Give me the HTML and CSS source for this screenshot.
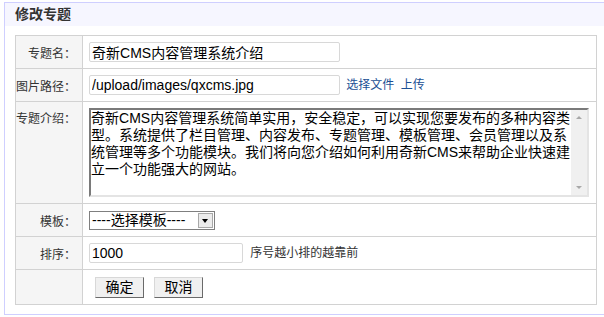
FILE: index.html
```html
<!DOCTYPE html>
<html lang="zh-CN">
<head>
    <meta charset="UTF-8">
    <title>修改专题</title>
    <link rel="stylesheet" href="styles.css">
</head>
<body>
    <div class="panel">
        <div class="panel-title">修改专题</div>
        <div class="panel-body">
            <table class="form-table">
                <tr>
                    <td class="label">专题名：</td>
                    <td><input type="text" class="text-input" value="奇新CMS内容管理系统介绍"></td>
                </tr>
                <tr>
                    <td class="label">图片路径：</td>
                    <td>
                        <input type="text" class="text-input" value="/upload/images/qxcms.jpg">
                        <a href="#" class="link">选择文件</a>
                        <a href="#" class="link">上传</a>
                    </td>
                </tr>
                <tr class="tall">
                    <td class="label">专题介绍：</td>
                    <td>
                        <div class="intro-box">
                            <textarea class="intro">奇新CMS内容管理系统简单实用，安全稳定，可以实现您要发布的多种内容类型。系统提供了栏目管理、内容发布、专题管理、模板管理、会员管理以及系统管理等多个功能模块。我们将向您介绍如何利用奇新CMS来帮助企业快速建立一个功能强大的网站。</textarea>
                            <div class="scroll">
                                <span class="arrow up"></span>
                                <span class="arrow down"></span>
                            </div>
                        </div>
                    </td>
                </tr>
                <tr>
                    <td class="label">模板：</td>
                    <td>
                        <div class="select">
                            <span class="select-text">----选择模板----</span>
                            <span class="select-btn"></span>
                        </div>
                    </td>
                </tr>
                <tr>
                    <td class="label">排序：</td>
                    <td>
                        <input type="text" class="text-input short" value="1000">
                        <span class="hint">序号越小排的越靠前</span>
                    </td>
                </tr>
                <tr class="actions">
                    <td class="label"></td>
                    <td>
                        <button class="btn">确定</button><button class="btn">取消</button>
                    </td>
                </tr>
            </table>
        </div>
    </div>
</body>
</html>
```

FILE: styles.css
```css
body {
    margin: 0;
    background-color: #fff;
    font-family: "Liberation Sans", "Noto Sans CJK SC", sans-serif;
    font-size: 12px;
    color: #333;
}

.panel {
    margin: 2px 0 0 4px;
    width: 599px;
    border: 1px solid #cfcfff;
    border-right: none;
}

.panel-title {
    height: 23px;
    line-height: 23px;
    padding-left: 10px;
    background-color: #f6f6ff;
    font-size: 14px;
    font-weight: bold;
    color: #333;
}

.panel-body {
    padding: 9px 0 9px 10px;
}

.form-table {
    width: 582px;
    border-collapse: collapse;
}

.form-table tr {
    height: 33px;
}

.form-table tr.tall {
    height: 102px;
}

.form-table tr.actions {
    height: 35px;
}

.form-table td {
    border: 1px solid #d2d2d2;
    padding: 0 0 0 6px;
    vertical-align: middle;
}

.form-table td.label {
    width: 59px;
    padding: 0 6px 0 0;
    text-align: right;
    background-color: #f5f5f5;
    color: #333;
    white-space: nowrap;
}

.form-table .tall td {
    vertical-align: top;
    padding-top: 6px;
}

.form-table .tall td.label {
    padding-top: 7px;
}

.text-input {
    width: 251px;
    height: 20px;
    box-sizing: border-box;
    border: 1px solid #d8d8d8;
    border-radius: 2px;
    padding: 0 2px;
    font-family: "Liberation Sans", "Noto Sans CJK SC", sans-serif;
    font-size: 14px;
    color: #000;
    vertical-align: middle;
}

.text-input.short {
    width: 154px;
}

.link {
    color: #1b4f94;
    text-decoration: none;
    margin-left: 3px;
}

.hint {
    margin-left: 4px;
    color: #333;
}

.intro-box {
    display: flex;
    width: 500px;
    height: 89px;
    box-sizing: border-box;
    border: 2px solid;
    border-color: #7a7a7a #e4e4e4 #e4e4e4 #7a7a7a;
    background-color: #fff;
}

.intro {
    width: 480px;
    height: 85px;
    margin: 0;
    padding: 0;
    border: none;
    outline: none;
    font-family: "Liberation Sans", "Noto Sans CJK SC", sans-serif;
    font-size: 14px;
    line-height: 17px;
    color: #000;
    resize: none;
    overflow: hidden;
}

.scroll {
    display: flex;
    flex-direction: column;
    justify-content: space-between;
    align-items: center;
    width: 16px;
    padding: 6px 0;
    box-sizing: border-box;
    background-color: #f0f0f0;
}

.arrow {
    width: 0;
    height: 0;
    border-left: 3px solid transparent;
    border-right: 3px solid transparent;
}

.arrow.up {
    border-bottom: 3px solid #a8a8a8;
}

.arrow.down {
    border-top: 3px solid #a8a8a8;
}

.select {
    display: flex;
    align-items: center;
    width: 126px;
    height: 19px;
    box-sizing: border-box;
    border: 1px solid #7f7f7f;
    background-color: #fff;
    font-size: 14px;
    color: #000;
}

.select-text {
    flex: 1;
    padding-left: 2px;
    line-height: 17px;
}

.select-btn {
    position: relative;
    width: 15px;
    height: 15px;
    margin-right: 1px;
    box-sizing: border-box;
    border: 1px solid #a8a8a8;
    background-color: #ececec;
}

.select-btn::after {
    content: "";
    position: absolute;
    left: 3px;
    top: 5px;
    border-left: 3.5px solid transparent;
    border-right: 3.5px solid transparent;
    border-top: 4px solid #000;
}

.btn {
    width: 49px;
    height: 21px;
    padding: 0;
    margin: 0 10px 0 6px;
    border: 1px solid;
    border-color: #d8d8d8 #6a6a6a #6a6a6a #d8d8d8;
    background-color: #f0f0f0;
    font-family: "Liberation Sans", "Noto Sans CJK SC", sans-serif;
    font-size: 14px;
    color: #000;
    line-height: 19px;
}

.btn + .btn {
    margin-left: 0;
}
```
